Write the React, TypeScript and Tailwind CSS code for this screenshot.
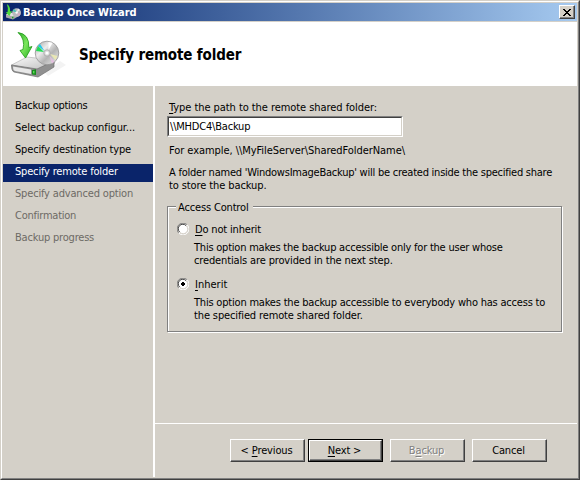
import type { ReactNode } from "react";

function WizardIcon({ className }: { className: string }) {
  return (
    <svg viewBox="0 0 58 52" className={className}>
      <defs>
        <linearGradient id="drive" x1="0" y1="0" x2="1" y2="1">
          <stop offset="0" stopColor="#fafafa" />
          <stop offset="1" stopColor="#bcbcbc" />
        </linearGradient>
        <linearGradient id="disc" x1="0" y1="0" x2="1" y2="1">
          <stop offset="0" stopColor="#9c9c9c" />
          <stop offset="0.35" stopColor="#ececec" />
          <stop offset="0.6" stopColor="#b4b4b4" />
          <stop offset="1" stopColor="#efefef" />
        </linearGradient>
        <linearGradient id="arrow" x1="0" y1="0" x2="1" y2="1">
          <stop offset="0" stopColor="#2fb02a" />
          <stop offset="0.5" stopColor="#7be75c" />
          <stop offset="1" stopColor="#27ab20" />
        </linearGradient>
      </defs>
      <path d="M38 48 L56 37 L50 33 L34 44Z" fill="#f3f3f3" />
      <path d="M1.5 37 L17 29 L43 32 L45 35 L27 42Z" fill="url(#drive)" stroke="#aaa" strokeWidth="0.6" />
      <path d="M1.5 37 L27 41 L44 33 L44 39 L28 49 L4 44 Q1.5 43 1.5 37Z" fill="#909090" stroke="#707070" strokeWidth="0.7" />
      <path d="M3 38.5 L21 41.5 L21 46 L5 43 Q3 42.5 3 38.5Z" fill="#e8e8e8" />
      <path d="M22 42 L26 41.3 L26 47 L22 46.5Z" fill="#178a1c" />
      <path d="M23 43 L24.5 42.7 L24.5 45.4 L23 45.2Z" fill="#58e055" />
      <circle cx="37" cy="25" r="11.8" fill="url(#disc)" stroke="#8a8a8a" strokeWidth="0.7" />
      <path d="M34 24 L26 23 L28 18Z" fill="#22dd55" />
      <path d="M34.5 23 L28 18 L30 16Z" fill="#22c8e8" />
      <path d="M38.5 22 L38.5 14 L42.5 15Z" fill="#fff" />
      <path d="M40 26 L47.5 28 L45.5 32Z" fill="#e9e7b4" />
      <path d="M39.5 28 L44.5 33.5 L42 35.5Z" fill="#e3bede" />
      <circle cx="37" cy="25" r="3.2" fill="#d8d8d8" stroke="#999" strokeWidth="0.6" />
      <circle cx="37" cy="25" r="1.6" fill="#fff" />
      <path
        d="M8 4.5 Q19.5 6 18.8 19.5 L22 18.5 L15.5 30 L10 22.5 L13 21.5 Q15.5 11 8 4.5Z"
        fill="url(#arrow)"
        stroke="#219b18"
        strokeWidth="0.8"
      />
    </svg>
  );
}

function TitleIcon() {
  return (
    <svg viewBox="0 0 17 16" className="h-4 w-[17px]">
      <path d="M1 10.5 L5 8.5 L13 10 L13 12.5 L8 15.5 L1 13.5Z" fill="#a9a9a9" />
      <path d="M1 10.5 L5 8.5 L13 10 L8 12.5Z" fill="#e4e4e4" />
      <path d="M7 12.8 L8.4 12.4 L8.4 14.6 L7 14.3Z" fill="#1fa325" />
      <circle cx="11.6" cy="8.6" r="4.4" fill="#b9b9bd" />
      <path d="M11.6 8.6 L7.6 7 L9.6 5Z" fill="#35c9b0" />
      <path d="M11.6 8.6 L13 4.6 L15 5.9Z" fill="#ececec" />
      <path d="M11.6 8.6 L15.6 10 L13.8 12.2Z" fill="#d8a9c6" />
      <circle cx="11.6" cy="8.6" r="1.2" fill="#fff" />
      <path d="M1.8 0 Q5.6 2 5 7.5 L7 7 L4.4 12 L0.8 8.4 L2.6 8 Q3.4 3.5 1.8 0Z" fill="#4fdc3c" />
    </svg>
  );
}

function Key({ children }: { children: ReactNode }) {
  return <span className="underline decoration-1 underline-offset-[2px]">{children}</span>;
}

function Radio({ checked }: { checked?: boolean }) {
  return (
    <svg viewBox="0 0 12 12" className="block h-3 w-3 shrink-0">
      <circle cx="6" cy="6" r="5" fill="#fff" />
      <path d="M1.8 10.2 A5.5 5.5 0 0 1 10.2 1.8" fill="none" stroke="#808080" />
      <path d="M10.2 1.8 A5.5 5.5 0 0 1 1.8 10.2" fill="none" stroke="#fff" />
      <path d="M2.6 9 A4.5 4.5 0 0 1 9 2.6" fill="none" stroke="#404040" />
      <path d="M9.4 3 A4.5 4.5 0 0 1 3 9.4" fill="none" stroke="#d4d0c8" />
      {checked && <path d="M5 4h2v1h1v2H7v1H5V7H4V5h1z" fill="#000" shapeRendering="crispEdges" />}
    </svg>
  );
}

const raised =
  "border border-t-white border-l-white border-r-[#404040] border-b-[#404040] shadow-[inset_-1px_-1px_0_#808080]";

function Button({ children, state }: { children: ReactNode; state?: "default" | "disabled" }) {
  return (
    <div className={`flex h-[23px] w-[75px] ${state === "default" ? "border border-black" : ""}`}>
      <button
        className={`flex w-full flex-1 items-center justify-center bg-[#d4d0c8] pr-[2px] tracking-[-0.16px] whitespace-pre ${raised} ${
          state === "disabled" ? "text-[#808080] [text-shadow:1px_1px_0_#fff]" : ""
        }`}
      >
        {children}
      </button>
    </div>
  );
}

const steps = [
  { label: "Backup options", tracking: "tracking-[-0.25px]" },
  { label: "Select backup configur...", tracking: "tracking-[-0.06px]" },
  { label: "Specify destination type", tracking: "tracking-[-0.16px]" },
  { label: "Specify remote folder", tracking: "tracking-[-0.18px]" },
  { label: "Specify advanced option", tracking: "tracking-[-0.17px]" },
  { label: "Confirmation", tracking: "tracking-[-0.24px]" },
  { label: "Backup progress", tracking: "tracking-[-0.2px]" },
];
const current = 3;

export default function App() {
  return (
    <div className="h-[480px] w-[580px] overflow-hidden border border-t-[#d4d0c8] border-l-[#d4d0c8] border-r-[#404040] border-b-[#404040] bg-[#d4d0c8] font-['DejaVu_Sans_Condensed','DejaVu_Sans',sans-serif] text-[11px] leading-[13px] text-black">
      <div className="flex h-full flex-col border border-t-white border-l-white border-r-[#808080] border-b-[#808080] p-px">
        <header className="flex h-[18px] shrink-0 items-center justify-between bg-linear-to-r from-[#0a246a] to-[#a6caf0] pr-[2px] pl-[2px] text-white">
          <div className="flex items-center gap-px">
            <TitleIcon />
            <span className="font-bold tracking-[-0.05px] whitespace-nowrap">Backup Once Wizard</span>
          </div>
          <button className={`flex h-[14px] w-4 items-center justify-center bg-[#d4d0c8] ${raised}`}>
            <svg viewBox="0 0 8 7" className="h-[7px] w-2" shapeRendering="crispEdges">
              <path
                d="M0 0h2v1h1v1h2v-1h1v-1h2v1h-1v1h-1v1h-1v1h1v1h1v1h1v1h-2v-1h-1v-1h-2v1h-1v1h-2v-1h1v-1h1v-1h1v-1h-1v-1h-1v-1h-1z"
                fill="#000"
              />
            </svg>
          </button>
        </header>

        <section className="mt-px flex h-16 shrink-0 items-center bg-white pl-[7px]">
          <WizardIcon className="h-[52px] w-[58px]" />
          <h1 className="mt-[2px] ml-[11px] text-[15px] leading-[18px] font-bold tracking-[-0.14px] whitespace-nowrap">
            Specify remote folder
          </h1>
        </section>

        <div className="flex min-h-0 flex-1">
          <nav className="flex w-[152px] shrink-0 flex-col gap-1 border-r-2 border-white pt-3">
            {steps.map((s, i) => (
              <div
                key={s.label}
                className={`h-[18px] pt-px pl-3 whitespace-nowrap ${s.tracking} ${
                  i === current ? "bg-[#0a246a] text-white" : i > current ? "text-[#6d6a65]" : ""
                }`}
              >
                {s.label}
              </div>
            ))}
          </nav>

          <main className="flex flex-1 flex-col">
            <div className="flex h-[338px] flex-col border-b border-white pt-[15px] pr-[14px] pl-3">
              <label className="pl-[2px] tracking-[-0.06px] whitespace-nowrap">
                <Key>T</Key>ype the path to the remote shared folder:
              </label>
              <div className="mt-[2px] h-[21px] w-[236px] border border-t-[#808080] border-l-[#808080] border-r-white border-b-white">
                <div className="flex h-full items-center border border-t-[#404040] border-l-[#404040] border-r-[#d4d0c8] border-b-[#d4d0c8] bg-white pl-px tracking-[-0.2px]">
                  \\MHDC4\Backup
                </div>
              </div>
              <p className="mt-[7px] pl-[2px] tracking-[-0.06px] whitespace-nowrap">
                For example, \\MyFileServer\SharedFolderName\
              </p>
              <p className="mt-[9px] pl-[2px] whitespace-nowrap">
                <span className="tracking-[-0.24px]">
                  A folder named 'WindowsImageBackup' will be created inside the specified share
                </span>
                <br />
                <span className="tracking-[-0.1px]">to store the backup.</span>
              </p>

              <div className="mt-[14px] h-[126px] w-[395px] border border-[#808080] shadow-[1px_1px_0_#fff,inset_1px_1px_0_#fff]">
                <div className="-mt-[6px] ml-2 w-[77px] bg-[#d4d0c8] pl-[2px] tracking-[-0.16px] whitespace-nowrap">
                  Access Control
                </div>
                <div className="mt-[9px] flex pl-[9px]">
                  <Radio />
                  <span className="ml-[6px] tracking-[-0.17px]">
                    <Key>D</Key>o not inherit
                  </span>
                </div>
                <p className="mt-[5px] pl-[26px] whitespace-nowrap">
                  <span className="tracking-[-0.22px]">
                    This option makes the backup accessible only for the user whose
                  </span>
                  <br />
                  <span className="tracking-[-0.14px]">credentials are provided in the next step.</span>
                </p>
                <div className="mt-[11px] flex pl-[9px]">
                  <Radio checked />
                  <span className="ml-[6px]">
                    <Key>I</Key>nherit
                  </span>
                </div>
                <p className="mt-[5px] pl-[26px] whitespace-nowrap">
                  <span className="tracking-[-0.2px]">
                    This option makes the backup accessible to everybody who has access to
                  </span>
                  <br />
                  <span className="tracking-[-0.13px]">the specified remote shared folder.</span>
                </p>
              </div>
            </div>

            <footer className="flex pt-[15px] pl-[75px]">
              <Button>
                {"< "}
                <Key>P</Key>revious
              </Button>
              <div className="ml-[3px]">
                <Button state="default">
                  <Key>N</Key>
                  {"ext >"}
                </Button>
              </div>
              <div className="ml-[7px]">
                <Button state="disabled">
                  B<Key>a</Key>ckup
                </Button>
              </div>
              <div className="ml-[7px]">
                <Button>Cancel</Button>
              </div>
            </footer>
          </main>
        </div>
      </div>
    </div>
  );
}
